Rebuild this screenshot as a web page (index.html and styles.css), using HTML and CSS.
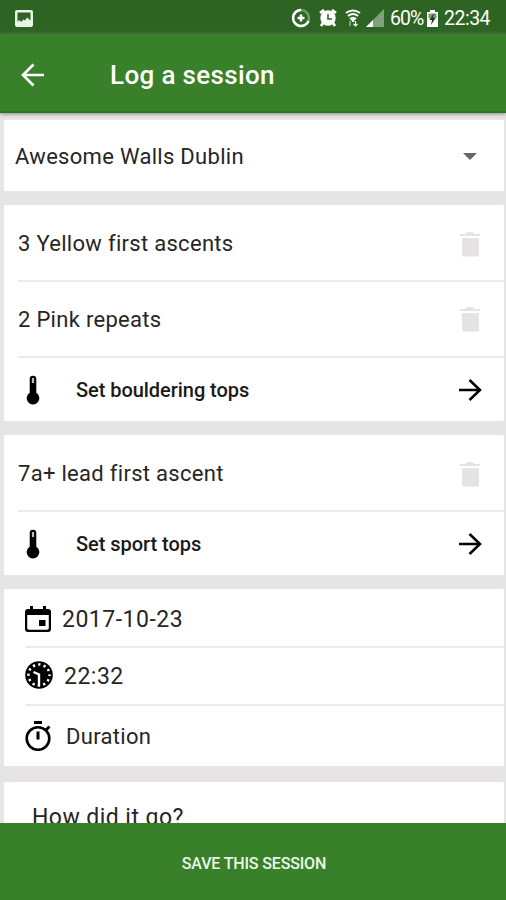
FILE: index.html
```html
<!DOCTYPE html>
<html lang="en">
<head>
<meta charset="utf-8">
<title>Log a session</title>
<link rel="stylesheet" href="styles.css">
</head>
<body>
<svg class="symbols" aria-hidden="true">
  <symbol id="trash" viewBox="0 0 22 26"><path d="M1 3h5.200Q7 1 11 1t4.800 2H21v2H1zM3 7h17v17q0 1.500-1.500 1.500h-14Q3 25.500 3 24z"/></symbol>
  <symbol id="forward" viewBox="0 0 24 24"><path d="M1 12H22M11.500 2 22 12 11.500 22" fill="none" stroke="currentColor" stroke-width="2.500"/></symbol>
  <symbol id="thermometer" viewBox="0 0 14 30"><path d="M3.700 4a3.300 3.300 0 0 1 6.600 0v13.800a6.300 6.300 0 1 1-6.600 0z"/><path d="M7 3v5" stroke="#bbb" stroke-width="2.200" fill="none"/></symbol>
</svg>
<div class="phone">
  <div class="status">
    <svg class="picture" viewBox="0 0 18 17"><rect width="18" height="17" rx="2" fill="#e9f3e7"/><path d="M2.500 2.500h13v8l-3.500-3-2 3-1.500-1-2.500 2.500-1.500-2-2 1.500z" fill="#2d6424"/></svg>
    <div class="status-right">
      <svg class="data-saver" viewBox="0 0 20 20" fill="none" stroke="#fff"><circle cx="10" cy="10" r="8" stroke-width="2.500" opacity=".35"/><path d="M10 2a8 8 0 1 0 7.500 11" stroke-width="2.500"/><path d="M10 6.500v7M6.500 10h7" stroke-width="2.500"/></svg>
      <svg class="alarm" viewBox="0 0 18 18"><path d="m1 4 4-3M17 4l-4-3M4 14l-2 3M14 14l2 3" stroke="#fff" stroke-width="2.800"/><circle cx="9" cy="9" r="7.700" fill="#fff"/><path d="M9 5v5h4" fill="none" stroke="#2d6424" stroke-width="1.500"/></svg>
      <svg class="wifi" viewBox="0 0 16 18" fill="none" stroke="#fff"><path d="M1 4q7-5 14 0M3 7q5-4 10 0M5 10q3-2.500 6 0" stroke-width="2"/><path d="m6 10 2 3 2-3z" fill="#fff"/><path d="M5 12v5" stroke-width="1.500" opacity=".5"/><path d="M10.500 17v-5M8.500 15l2 2 2-2" stroke-width="1.200"/></svg>
      <svg class="signal" viewBox="0 0 18 18" fill="#fff"><path d="M0 18 18 0v18z" opacity=".4"/><path d="m0 18 7-7v7z"/></svg>
      <span class="percent">60%</span>
      <svg class="battery" viewBox="0 0 11 17"><path d="M3 0h5v2h3v15H0V2h3z" fill="#fff"/><path d="M1.500 3.500h8v5h-8z" fill="#789a72"/><path d="M7 3 2.500 10h2.500l-1 5 4.500-7H6z" fill="#183d12"/></svg>
      <span class="clock">22:34</span>
    </div>
  </div>
  <header class="toolbar">
    <svg class="back" viewBox="0 0 24 24"><path d="M23 12H2M12.500 1.500 2 12l10.500 10.500" fill="none" stroke="#fff" stroke-width="2.700"/></svg>
    <h1 class="title">Log a session</h1>
  </header>
  <main class="content">
    <section class="card gym"><span class="gym-name">Awesome Walls Dublin</span><span class="caret"></span></section>
    <section class="card">
      <div class="row climb"><span>3 Yellow first ascents</span><svg class="trash"><use href="#trash"/></svg></div>
      <div class="row climb"><span>2 Pink repeats</span><svg class="trash"><use href="#trash"/></svg></div>
      <div class="row tops"><svg class="thermometer"><use href="#thermometer"/></svg><span class="label">Set bouldering tops</span><svg class="forward"><use href="#forward"/></svg></div>
    </section>
    <section class="card">
      <div class="row climb"><span>7a+ lead first ascent</span><svg class="trash"><use href="#trash"/></svg></div>
      <div class="row tops"><svg class="thermometer"><use href="#thermometer"/></svg><span class="label">Set sport tops</span><svg class="forward"><use href="#forward"/></svg></div>
    </section>
    <section class="card when">
      <div class="row date">
        <svg class="calendar" viewBox="0 0 26 26"><path d="M5 0h3v3h10V0h3v3h2q3 0 3 3v17q0 3-3 3H3q-3 0-3-3V6q0-3 3-3h2zM2.200 9v13q0 1.800 1.800 1.800h18q1.800 0 1.800-1.800V9z" fill-rule="evenodd"/><path d="M14 14h6.500v6H14z"/></svg>
        <span>2017-10-23</span>
      </div>
      <div class="row time">
        <svg class="dial" viewBox="0 0 28 28"><circle cx="14" cy="14" r="13.800"/><circle cx="14" cy="14" r="10.500" fill="none" stroke="#fff" stroke-width="2.500" stroke-dasharray="2.300 3.198" stroke-dashoffset="1.150"/><path d="M14 25V13.500L8.500 11" fill="none" stroke="#fff" stroke-width="2.400"/></svg>
        <span>22:32</span>
      </div>
      <div class="row duration">
        <svg class="stopwatch" viewBox="0 0 26 30"><g fill="none" stroke="#000"><circle cx="13" cy="17.500" r="11.300" stroke-width="2.600"/><path d="M9 1.500h8M13 10.500v8" stroke-width="3"/><path d="m21 9 3.500-3.500" stroke-width="2.800"/></g></svg>
        <span>Duration</span>
      </div>
    </section>
    <section class="card notes">How did it go?</section>
  </main>
  <button class="save">SAVE THIS SESSION</button>
</div>
</body>
</html>
```
FILE: styles.css
```css
* { box-sizing: border-box; }
body { margin: 0; font-family: Roboto, "Liberation Sans", sans-serif; color: #262626; }
.symbols { display: none; }
.phone { width: 506px; height: 900px; display: flex; flex-direction: column; overflow: hidden; background: #e7e4e5; }
.status { height: 34px; flex: none; padding: 2px 15px 0 15px; display: flex; align-items: center; justify-content: space-between; background: #2d6424; color: #fff; }
.picture { width: 18px; height: 17px; }
.status-right { display: flex; align-items: center; height: 32px; font-size: 19.500px; }
.data-saver { width: 20px; height: 20px; margin-right: 8px; }
.alarm { width: 18px; height: 18px; margin-right: 8px; }
.wifi { width: 16px; height: 18px; margin-right: 5px; }
.signal { width: 18px; height: 18px; margin-right: 6px; }
.percent { width: 34px; margin-right: 3px; letter-spacing: -1px; white-space: nowrap; }
.battery { width: 11px; height: 17px; margin-right: 6px; }
.clock { width: 47px; letter-spacing: -.5px; }
.toolbar { height: 79px; flex: none; padding: 5px 21px 0; display: flex; align-items: center; background: #39802b; border-bottom: 2px solid #1e7d17; box-shadow: 0 1px 4px #8d858d; z-index: 1; }
.back { width: 24px; height: 24px; margin-right: 65px; }
.title { margin: 0; font-size: 26px; font-weight: 500; letter-spacing: .35px; color: #fff; }
.content { flex: 1; min-height: 0; overflow: hidden; padding: 7px 2px 0 4px; display: flex; flex-direction: column; gap: 14px; font-size: 22px; letter-spacing: .3px; }
.card { flex: none; background: #fff; border-radius: 2px; box-shadow: 0 0 1px #fff; }
.gym { height: 71px; padding: 2px 27px 0 11px; display: flex; align-items: center; justify-content: space-between; }
.caret { width: 14px; height: 7px; background: #666; clip-path: polygon(0 0, 100% 0, 50% 100%); }
.row { display: flex; align-items: center; margin-left: 14px; }
.row + .row { border-top: 2px solid #ebeaeb; }
.climb { height: 75px; padding: 2px 23px 0 0; justify-content: space-between; }
.climb + .climb { height: 76px; padding-top: 0; }
.tops { height: 65px; padding: 1px 22px 0 8px; font-size: 20px; letter-spacing: -.05px; font-weight: 500; color: #1a1a1a; }
.trash { width: 22px; height: 26px; fill: #e5e3e4; }
.thermometer { width: 14px; height: 30px; margin-right: 36px; fill: #000; }
.forward { width: 24px; height: 24px; margin-left: auto; color: #000; }
.when .row { margin-left: 21px; }
.date { height: 57px; padding-top: 3px; font-size: 23px; letter-spacing: .5px; }
.time { height: 58px; font-size: 23px; letter-spacing: .5px; }
.duration { height: 62px; padding-top: 1px; }
.calendar { width: 26px; height: 26px; margin: -1px 11px 0 0; }
.dial { width: 28px; height: 28px; margin: -2px 11px 0 0; }
.stopwatch { width: 26px; height: 30px; margin: -2px 15px 0 0; }
.notes { height: 140px; margin-top: 2px; padding: 22px 28px; line-height: 28px; font-size: 23px; letter-spacing: .45px; }
.save { height: 77px; flex: none; border: 0; padding: 4px 0 0 2px; background: #39802b; color: #eaf8e7; font: 500 16px Roboto, sans-serif; letter-spacing: -.15px; }
```
